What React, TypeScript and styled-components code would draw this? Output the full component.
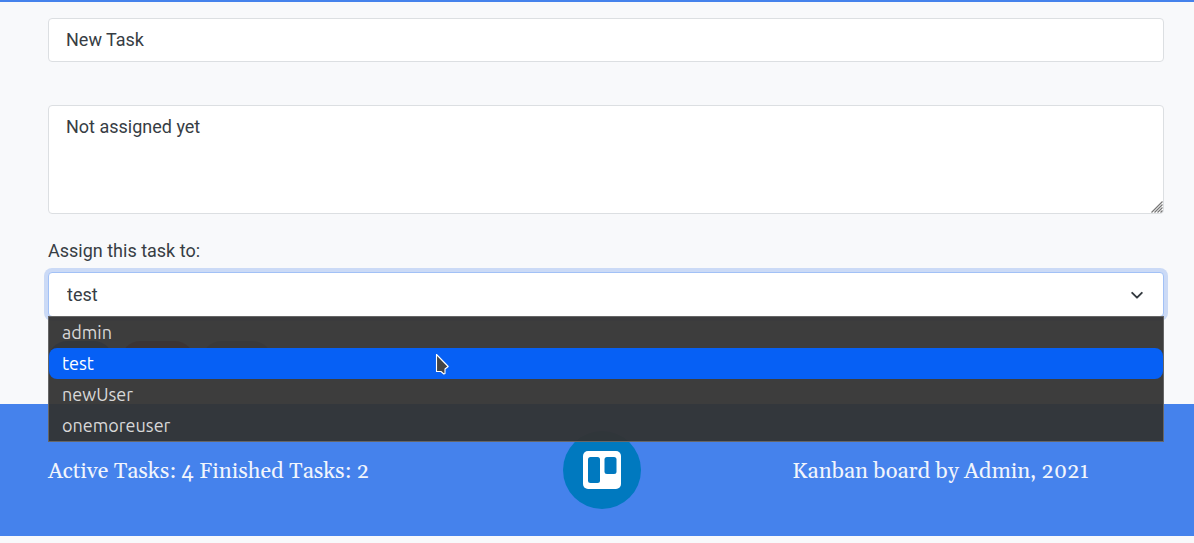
import React from "react";
import styled, { createGlobalStyle } from "styled-components";

const GlobalStyle = createGlobalStyle`
  *, *::before, *::after { box-sizing: border-box; }
  body {
    margin: 0;
    background: #f8f9fb;
    color: #373d44;
    font: 18px/28px Roboto, "Liberation Sans", sans-serif;
  }
`;

const Page = styled.main`
  border-top: 2px solid #4582ec;
`;

const TaskForm = styled.form`
  display: flex;
  flex-direction: column;
  padding: 16px 30px 25px 48px;
`;

const TitleInput = styled.input`
  height: 44px;
  margin-bottom: 43px;
  padding: 6px 17px 8px;
  border: 1px solid #dcdfe2;
  border-radius: 4px;
  background: #fff;
  color: inherit;
  font: inherit;
  outline: none;
`;

const NotesField = styled.div`
  position: relative;
  display: flex;
  margin-bottom: 23px;
`;

const NotesInput = styled.textarea`
  flex: 1;
  height: 109px;
  padding: 7px 17px;
  border: 1px solid #dcdfe2;
  border-radius: 4px;
  background: #fff;
  color: inherit;
  font: inherit;
  outline: none;
  resize: none;
`;

const ResizeGrip = styled.svg`
  position: absolute;
  right: 1px;
  bottom: 1px;
`;

const AssigneeLabel = styled.label`
  margin-bottom: 7px;
`;

const AssigneeField = styled.div`
  position: relative;
  display: flex;
`;

const AssigneeSelect = styled.select`
  flex: 1;
  height: 45px;
  padding: 7px 18px;
  border: 1px solid #a2c1f6;
  border-radius: 4px;
  background: #fff;
  box-shadow: 0 0 0 4px #cbdaf6;
  color: inherit;
  font: inherit;
  outline: none;
  appearance: none;
`;

const Chevron = styled.svg`
  position: absolute;
  right: 20px;
  top: 16px;
  pointer-events: none;
`;

const OptionList = styled.ul`
  position: absolute;
  z-index: 2;
  top: 44px;
  left: 0;
  right: 0;
  margin: 0;
  padding: 0;
  border: 1px solid #666;
  background: rgba(51, 51, 51, 0.95);
  color: #d8d8d8;
  font: 18px/31px Ubuntu, "Noto Sans", sans-serif;
  list-style: none;
`;

const Option = styled.li<{ $active: boolean }>`
  padding: 0 13px;
  border-radius: 8px;
  background: ${(p) => (p.$active ? "#0660f5" : "transparent")};
  color: ${(p) => (p.$active ? "#fff" : "inherit")};
`;

const Pointer = styled.svg`
  position: absolute;
  z-index: 3;
  left: 387px;
  top: 81px;
`;

const Actions = styled.div`
  display: flex;
  gap: 8px;
  margin-top: 24px;
`;

const ActionButton = styled.button<{ $color: string; $width: number }>`
  width: ${(p) => p.$width}px;
  height: 38px;
  border: 0;
  border-radius: 19px;
  background: ${(p) => p.$color};
`;

const Footer = styled.footer`
  display: grid;
  grid-template-columns: 1fr auto 1fr;
  align-items: center;
  padding: 27px 38px 27px 48px;
  background: #4582ec;
  color: #f1f5fc;
  font: 22px/32px Georgia, Gelasio, "Liberation Serif", serif;
`;

const FooterText = styled.span`
  padding-top: 4px;
`;

const Credit = styled(FooterText)`
  padding-right: 67px;
  text-align: right;
`;

const Logo = styled.svg`
  display: block;
`;

const users = ["admin", "test", "newUser", "onemoreuser"];

export default function App() {
  const [assignee, setAssignee] = React.useState("test");
  return (
    <>
      <GlobalStyle />
      <Page>
        <TaskForm>
          <TitleInput aria-label="Task title" defaultValue="New Task" />
          <NotesField>
            <NotesInput aria-label="Task description" defaultValue="Not assigned yet" />
            <ResizeGrip width="12" height="12" viewBox="0 0 12 12" aria-hidden="true">
              <path
                d="M0.500 11.500l11-11M3.500 11.500l8-8M6.500 11.500l5-5M9.500 11.500l2-2"
                stroke="#777"
                strokeWidth="1.200"
                fill="none"
              />
            </ResizeGrip>
          </NotesField>
          <AssigneeLabel htmlFor="assignee">Assign this task to:</AssigneeLabel>
          <AssigneeField>
            <AssigneeSelect
              id="assignee"
              value={assignee}
              onChange={(e) => setAssignee(e.target.value)}
            >
              {users.map((user) => (
                <option key={user}>{user}</option>
              ))}
            </AssigneeSelect>
            <Chevron width="14" height="14" viewBox="0 0 16 16" aria-hidden="true">
              <path
                d="M2.500 5.500l5.500 5.500 5.500-5.500"
                fill="none"
                stroke="#343a40"
                strokeWidth="2.200"
                strokeLinecap="round"
                strokeLinejoin="round"
              />
            </Chevron>
            <OptionList role="listbox" aria-label="Users">
              {users.map((user) => (
                <Option
                  key={user}
                  role="option"
                  aria-selected={user === assignee}
                  $active={user === assignee}
                  onClick={() => setAssignee(user)}
                >
                  {user}
                </Option>
              ))}
            </OptionList>
            <Pointer width="16" height="24" viewBox="0 0 16 24" aria-hidden="true">
              <path
                d="M1.500 1.500v17h4.500l2.800 2.500 1.200-.6v-4.400l3.200-2.500z"
                fill="#444"
                stroke="#fff"
                strokeWidth="1.100"
                strokeLinejoin="round"
              />
            </Pointer>
          </AssigneeField>
          <Actions>
            <ActionButton type="button" aria-label="Save" $color="#4582ec" $width={65} />
            <ActionButton type="button" aria-label="Delete" $color="#d9534f" $width={73} />
            <ActionButton type="button" aria-label="Cancel" $color="#adb5bd" $width={70} />
          </Actions>
        </TaskForm>
        <Footer>
          <FooterText>Active Tasks: 4 Finished Tasks: 2</FooterText>
          <Logo width="78" height="78" viewBox="0 0 78 78" role="img" aria-label="Board logo">
            <circle cx="39" cy="39" r="39" fill="#0079bf" />
            <rect x="20" y="20" width="38" height="38" rx="5" fill="#fff" />
            <rect x="25" y="26" width="12" height="26" rx="2.500" fill="#0079bf" />
            <rect x="41.500" y="26" width="12" height="17" rx="2.500" fill="#0079bf" />
          </Logo>
          <Credit>Kanban board by Admin, 2021</Credit>
        </Footer>
      </Page>
    </>
  );
}
